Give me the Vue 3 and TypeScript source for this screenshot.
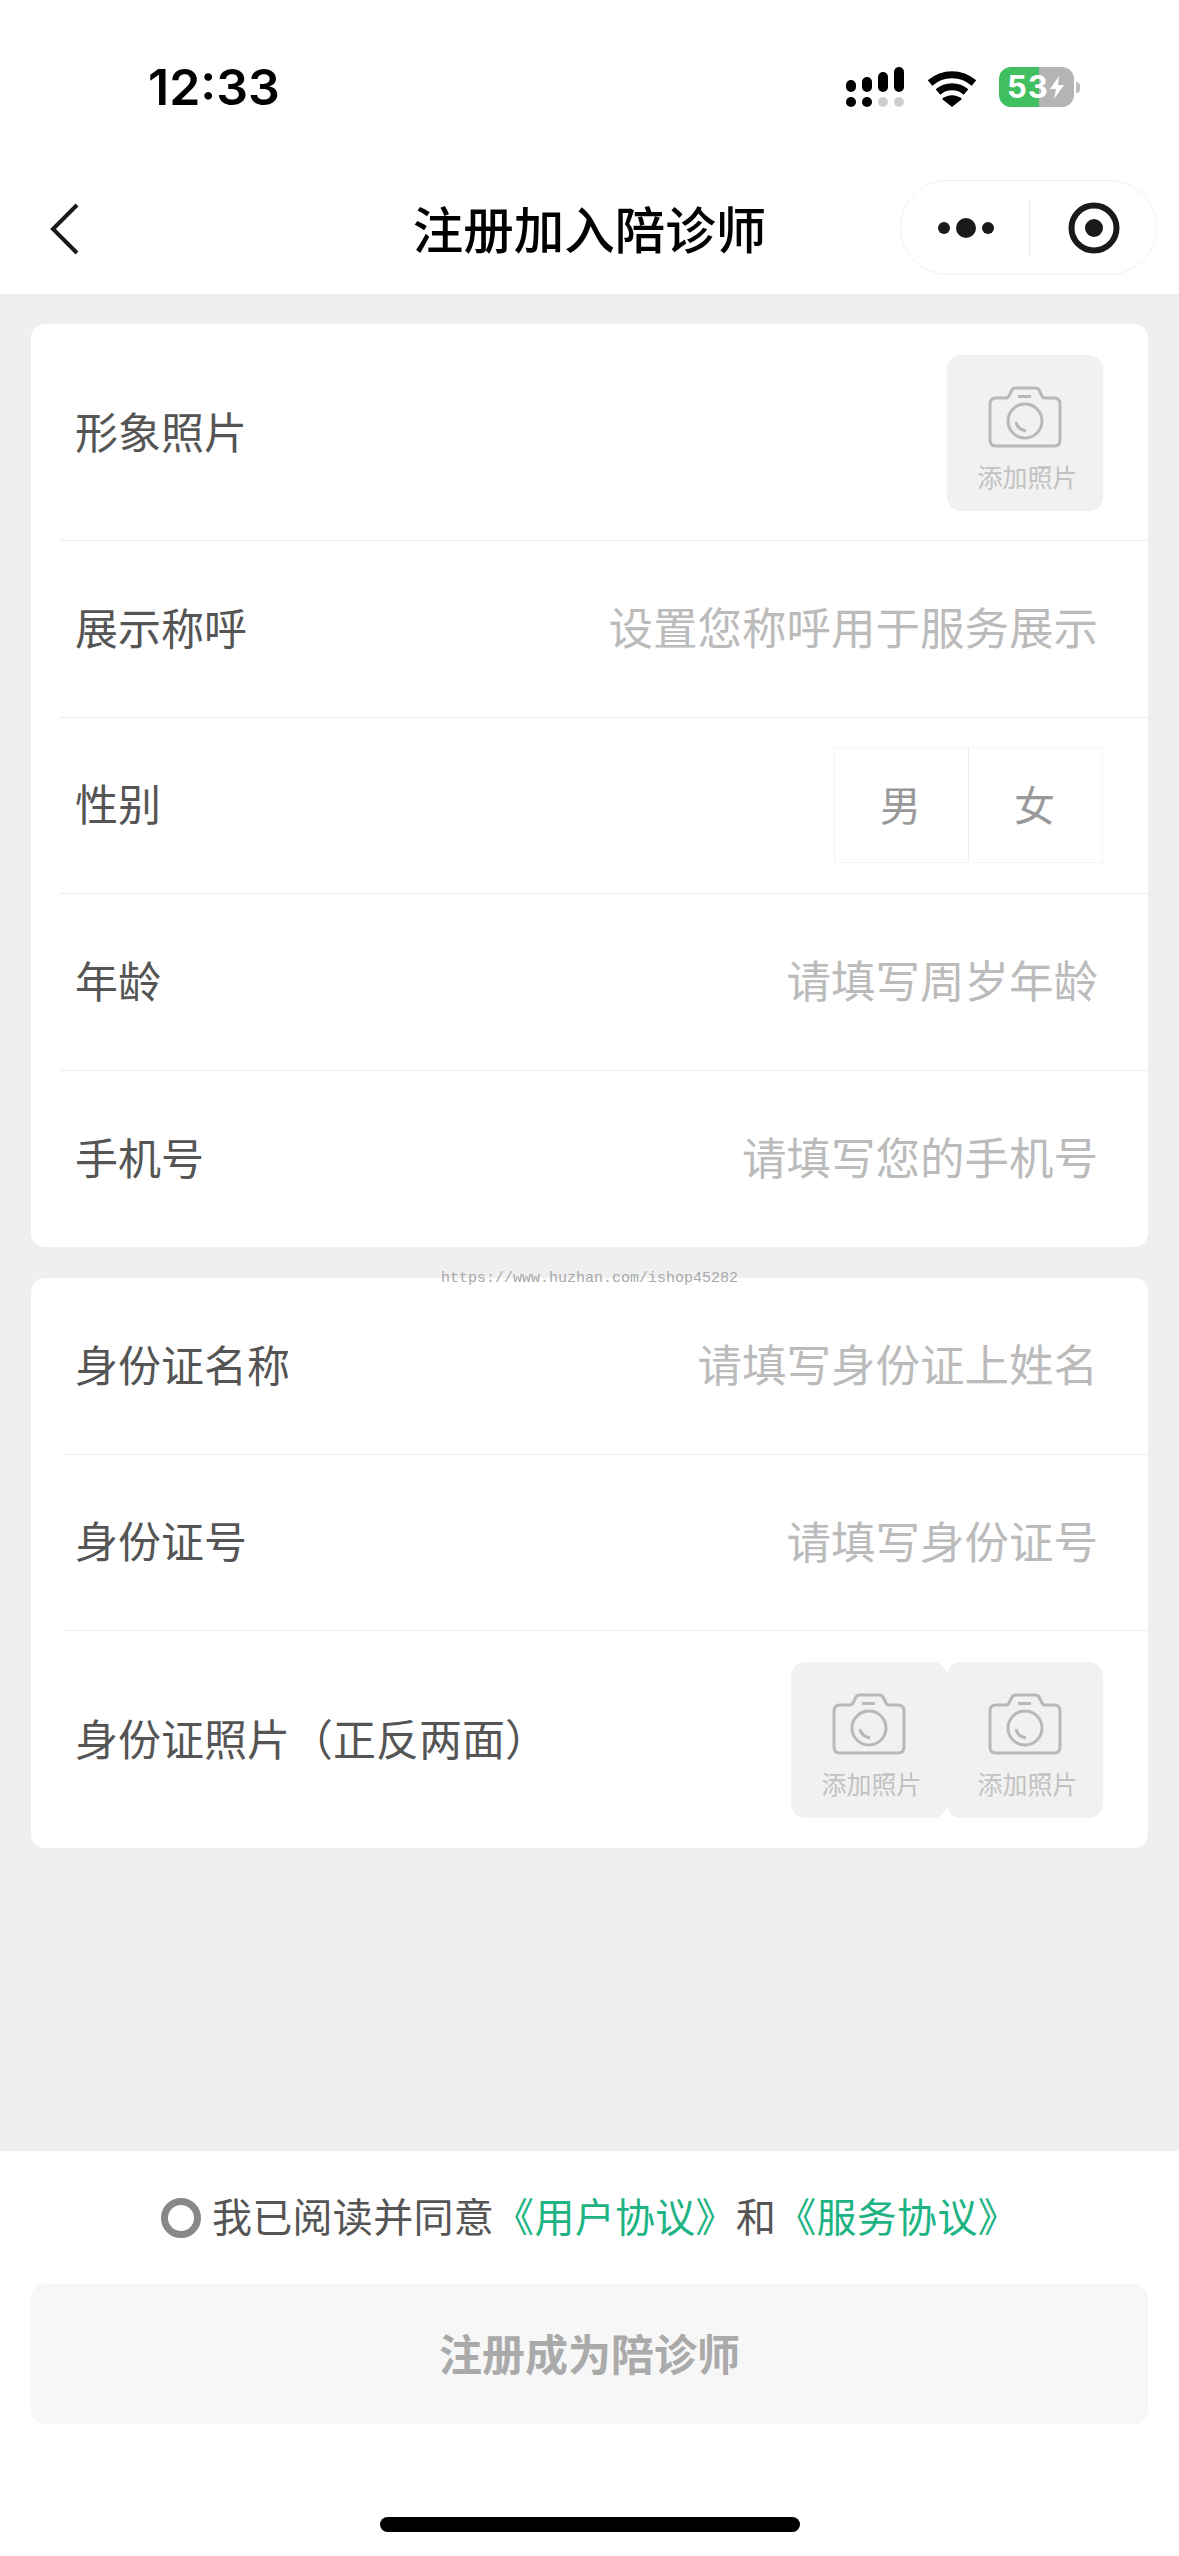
<template>
  <div class="page">
    <!-- Status bar -->
    <div class="status-bar">
      <span class="time">12:33</span>
      <div class="status-icons">
        <svg class="signal" width="58" height="40" viewBox="0 0 58 40">
          <g fill="#000">
            <rect x="0" y="13" width="10" height="12" rx="5" />
            <rect x="16" y="10" width="10" height="15" rx="5" />
            <rect x="32" y="5" width="10" height="20" rx="5" />
            <rect x="48" y="0" width="10" height="25" rx="5" />
            <circle cx="5" cy="35" r="5" />
            <circle cx="21" cy="35" r="5" />
          </g>
          <circle cx="37" cy="35" r="5" fill="#cfcfcf" />
          <circle cx="53" cy="35" r="5" fill="#cfcfcf" />
        </svg>
        <svg class="wifi" width="50" height="38" viewBox="0 0 50 38">
          <path d="M3 14C16 3 34 3 47 14" fill="none" stroke="#000" stroke-width="7" />
          <path d="M11 23C19 16 31 16 39 23" fill="none" stroke="#000" stroke-width="7" />
          <path d="M25 38L15 30C21 25 29 25 35 30Z" fill="#000" />
        </svg>
        <div class="battery">
          <div class="battery-body">
            <span class="battery-num">53</span>
            <svg class="bolt" width="14" height="23" viewBox="0 0 14 23">
              <path d="M9 0L0 13H6L4 23L14 9H8Z" fill="#fff" />
            </svg>
          </div>
          <div class="battery-nub"></div>
        </div>
      </div>
    </div>

    <!-- Nav bar -->
    <div class="nav-bar">
      <svg class="back" width="30" height="52" viewBox="0 0 30 52">
        <path d="M27 2L3 26L27 50" fill="none" stroke="#1a1a1a" stroke-width="4" />
      </svg>
      <div class="nav-title">注册加入陪诊师</div>
      <div class="capsule">
        <svg width="56" height="24" viewBox="0 0 56 24">
          <circle cx="6" cy="12" r="6" fill="#1a1a1a" />
          <circle cx="28" cy="12" r="10" fill="#1a1a1a" />
          <circle cx="50" cy="12" r="6" fill="#1a1a1a" />
        </svg>
        <div class="capsule-line"></div>
        <svg width="52" height="52" viewBox="0 0 52 52">
          <circle cx="26" cy="26" r="22.5" fill="none" stroke="#1a1a1a" stroke-width="6" />
          <circle cx="26" cy="26" r="9" fill="#1a1a1a" />
        </svg>
      </div>
    </div>

    <!-- Form -->
    <div class="content">
      <div class="card">
        <div class="row tall">
          <span class="label">形象照片</span>
          <div class="tiles">
            <div class="tile">
              <svg class="camera" width="74" height="62" viewBox="0 0 74 62">
                <path
                  d="M8 12H18Q20 12 21 10L24 4Q25 2 28 2H47Q50 2 51 4L54 10Q55 12 57 12H66Q72 12 72 18V54Q72 60 66 60H8Q2 60 2 54V18Q2 12 8 12Z"
                  fill="none"
                  stroke="#b8b8b8"
                  stroke-width="3"
                />
                <path d="M30 10.5H43" stroke="#b8b8b8" stroke-width="3" />
                <circle cx="37" cy="35" r="17" fill="none" stroke="#b8b8b8" stroke-width="3" />
                <path d="M28 36Q29 43 38 45" fill="none" stroke="#b8b8b8" stroke-width="3" />
              </svg>
              <span class="tile-text">添加照片</span>
            </div>
          </div>
        </div>
        <div class="row">
          <span class="label">展示称呼</span>
          <span class="placeholder">设置您称呼用于服务展示</span>
        </div>
        <div class="row">
          <span class="label">性别</span>
          <div class="gender">
            <span v-for="g in genders" :key="g" class="gender-item">{{ g }}</span>
          </div>
        </div>
        <div v-for="item in basicFields" :key="item.label" class="row">
          <span class="label">{{ item.label }}</span>
          <span class="placeholder">{{ item.hint }}</span>
        </div>
      </div>

      <div class="card">
        <div v-for="item in idFields" :key="item.label" class="row">
          <span class="label">{{ item.label }}</span>
          <span class="placeholder">{{ item.hint }}</span>
        </div>
        <div class="row tall">
          <span class="label">身份证照片（正反两面）</span>
          <div class="tiles">
            <div v-for="n in 2" :key="n" class="tile">
              <svg class="camera" width="74" height="62" viewBox="0 0 74 62">
                <path
                  d="M8 12H18Q20 12 21 10L24 4Q25 2 28 2H47Q50 2 51 4L54 10Q55 12 57 12H66Q72 12 72 18V54Q72 60 66 60H8Q2 60 2 54V18Q2 12 8 12Z"
                  fill="none"
                  stroke="#b8b8b8"
                  stroke-width="3"
                />
                <path d="M30 10.5H43" stroke="#b8b8b8" stroke-width="3" />
                <circle cx="37" cy="35" r="17" fill="none" stroke="#b8b8b8" stroke-width="3" />
                <path d="M28 36Q29 43 38 45" fill="none" stroke="#b8b8b8" stroke-width="3" />
              </svg>
              <span class="tile-text">添加照片</span>
            </div>
          </div>
        </div>
      </div>
    </div>

    <!-- Footer -->
    <div class="footer">
      <div class="agree">
        <span class="radio"></span>
        <span class="agree-text">我已阅读并同意<em>《用户协议》</em>和<em>《服务协议》</em></span>
      </div>
      <button class="submit" type="button">注册成为陪诊师</button>
      <div class="home-bar"></div>
    </div>

    <div class="watermark">https://www.huzhan.com/ishop45282</div>
  </div>
</template>

<script setup lang="ts">
interface Field {
  label: string
  hint: string
}

const genders: string[] = ['男', '女']

const basicFields: Field[] = [
  { label: '年龄', hint: '请填写周岁年龄' },
  { label: '手机号', hint: '请填写您的手机号' },
]

const idFields: Field[] = [
  { label: '身份证名称', hint: '请填写身份证上姓名' },
  { label: '身份证号', hint: '请填写身份证号' },
]
</script>

<style>
body {
  background: #efefef;
}
</style>

<style scoped>
.page {
  position: relative;
  display: flex;
  flex-direction: column;
  width: 1179px;
  height: 2556px;
  overflow: hidden;
  background: #efefef;
  font-family: "Noto Sans CJK SC", "Noto Sans", sans-serif;
}

.status-bar {
  display: flex;
  justify-content: space-between;
  height: 180px;
  box-sizing: border-box;
  padding: 61px 99px 0 148px;
  background: #fff;
}

.time {
  font-family: Inter, sans-serif;
  font-size: 50px;
  line-height: 52px;
  font-weight: 600;
  color: #000;
}

.status-icons {
  display: flex;
  align-items: flex-start;
  padding-top: 6px;
}

.wifi {
  margin: 2px 0 0 23px;
}

.battery {
  display: flex;
  align-items: center;
  margin-left: 22px;
}

.battery-body {
  display: flex;
  align-items: center;
  box-sizing: border-box;
  width: 75px;
  height: 40px;
  padding-left: 8px;
  border-radius: 12px;
  background: linear-gradient(to right, #3fbf5f 40px, #b4b4b4 40px);
}

.battery-num {
  font-family: Inter, sans-serif;
  font-size: 31px;
  line-height: 40px;
  font-weight: 700;
  color: #fff;
  letter-spacing: 1px;
}

.bolt {
  flex-shrink: 0;
  margin-left: 1px;
}

.battery-nub {
  width: 4px;
  height: 11px;
  margin-left: 2px;
  border-radius: 0 4px 4px 0;
  background: #bdbdbd;
}

.nav-bar {
  display: grid;
  grid-template-columns: 1fr auto 1fr;
  align-items: center;
  height: 114px;
  box-sizing: border-box;
  padding: 0 22px 19px;
  background: #fff;
}

.back {
  margin: 2px 0 0 28px;
}

.nav-title {
  padding-bottom: 2px;
  font-size: 50.5px;
  line-height: 60px;
  font-weight: 500;
  color: #000;
}

.capsule {
  justify-self: end;
  display: flex;
  align-items: center;
  box-sizing: border-box;
  width: 257px;
  height: 95px;
  padding-left: 37px;
  border: 1px solid #f1f1f1;
  border-radius: 48px;
}

.capsule-line {
  width: 1px;
  height: 56px;
  margin: 0 38px 0 35px;
  background: #e9e9e9;
}

.content {
  flex: 1;
  display: flex;
  flex-direction: column;
  gap: 31px;
  padding: 30px 31px 0;
}

.card {
  border-radius: 14px;
  background: #fff;
}

.row {
  display: flex;
  align-items: center;
  justify-content: space-between;
  box-sizing: border-box;
  height: 176.5px;
  margin-left: 29px;
  padding: 0 45px 0 15px;
  border-bottom: 1px solid #ececec;
}

.card + .card .row {
  margin-left: 33px;
  padding-left: 11px;
}

.row:last-child {
  border-bottom: none;
}

.row.tall {
  height: 217px;
}

.row.tall:not(:last-child) {
  padding-top: 2px;
}

.label {
  padding-bottom: 6px;
  font-size: 43px;
  color: #555;
}

.placeholder {
  margin-right: 5px;
  padding-bottom: 6px;
  font-size: 44.5px;
  color: #bbb;
}

.tiles {
  display: flex;
}

.tile {
  display: flex;
  flex-direction: column;
  align-items: center;
  box-sizing: border-box;
  width: 156px;
  height: 156px;
  padding-top: 31px;
  border-radius: 14px;
  background: #f1f1f1;
}

.tile-text {
  margin: 13px 0 0 5px;
  font-size: 25px;
  line-height: 30px;
  color: #c2c2c2;
}

.gender {
  display: flex;
  width: 269px;
  height: 116px;
  box-sizing: border-box;
  border: 1px solid #f4f4f4;
}

.gender-item {
  flex: 1;
  display: flex;
  align-items: center;
  justify-content: center;
  padding: 0 2px 4px 0;
  font-size: 41px;
  color: #999;
}

.gender-item + .gender-item {
  border-left: 1px solid #ececec;
}

.footer {
  display: flex;
  flex-direction: column;
  height: 405px;
  box-sizing: border-box;
  padding: 0 31px;
  background: #fff;
}

.agree {
  display: flex;
  align-items: center;
  justify-content: center;
  gap: 11px;
  height: 133px;
}

.radio {
  box-sizing: border-box;
  width: 40px;
  height: 40px;
  border: 7px solid #888;
  border-radius: 50%;
}

.agree-text {
  padding-bottom: 6px;
  font-size: 40px;
  letter-spacing: 0.3px;
  color: #555;
}

.agree-text em {
  font-style: normal;
  color: #1db383;
}

.submit {
  height: 140px;
  padding-bottom: 6px;
  border: none;
  border-radius: 14px;
  background: #f7f7f7;
  font-family: inherit;
  font-size: 43px;
  font-weight: 700;
  color: #aaa;
}

.home-bar {
  align-self: center;
  width: 420px;
  height: 15px;
  margin-top: 93px;
  border-radius: 8px;
  background: #000;
}

/* sits across the gap between the two cards */
.watermark {
  position: absolute;
  left: 441px;
  top: 1270px;
  font-family: "Liberation Mono", monospace;
  font-size: 15px;
  line-height: 18px;
  color: #a8a8a8;
}
</style>
